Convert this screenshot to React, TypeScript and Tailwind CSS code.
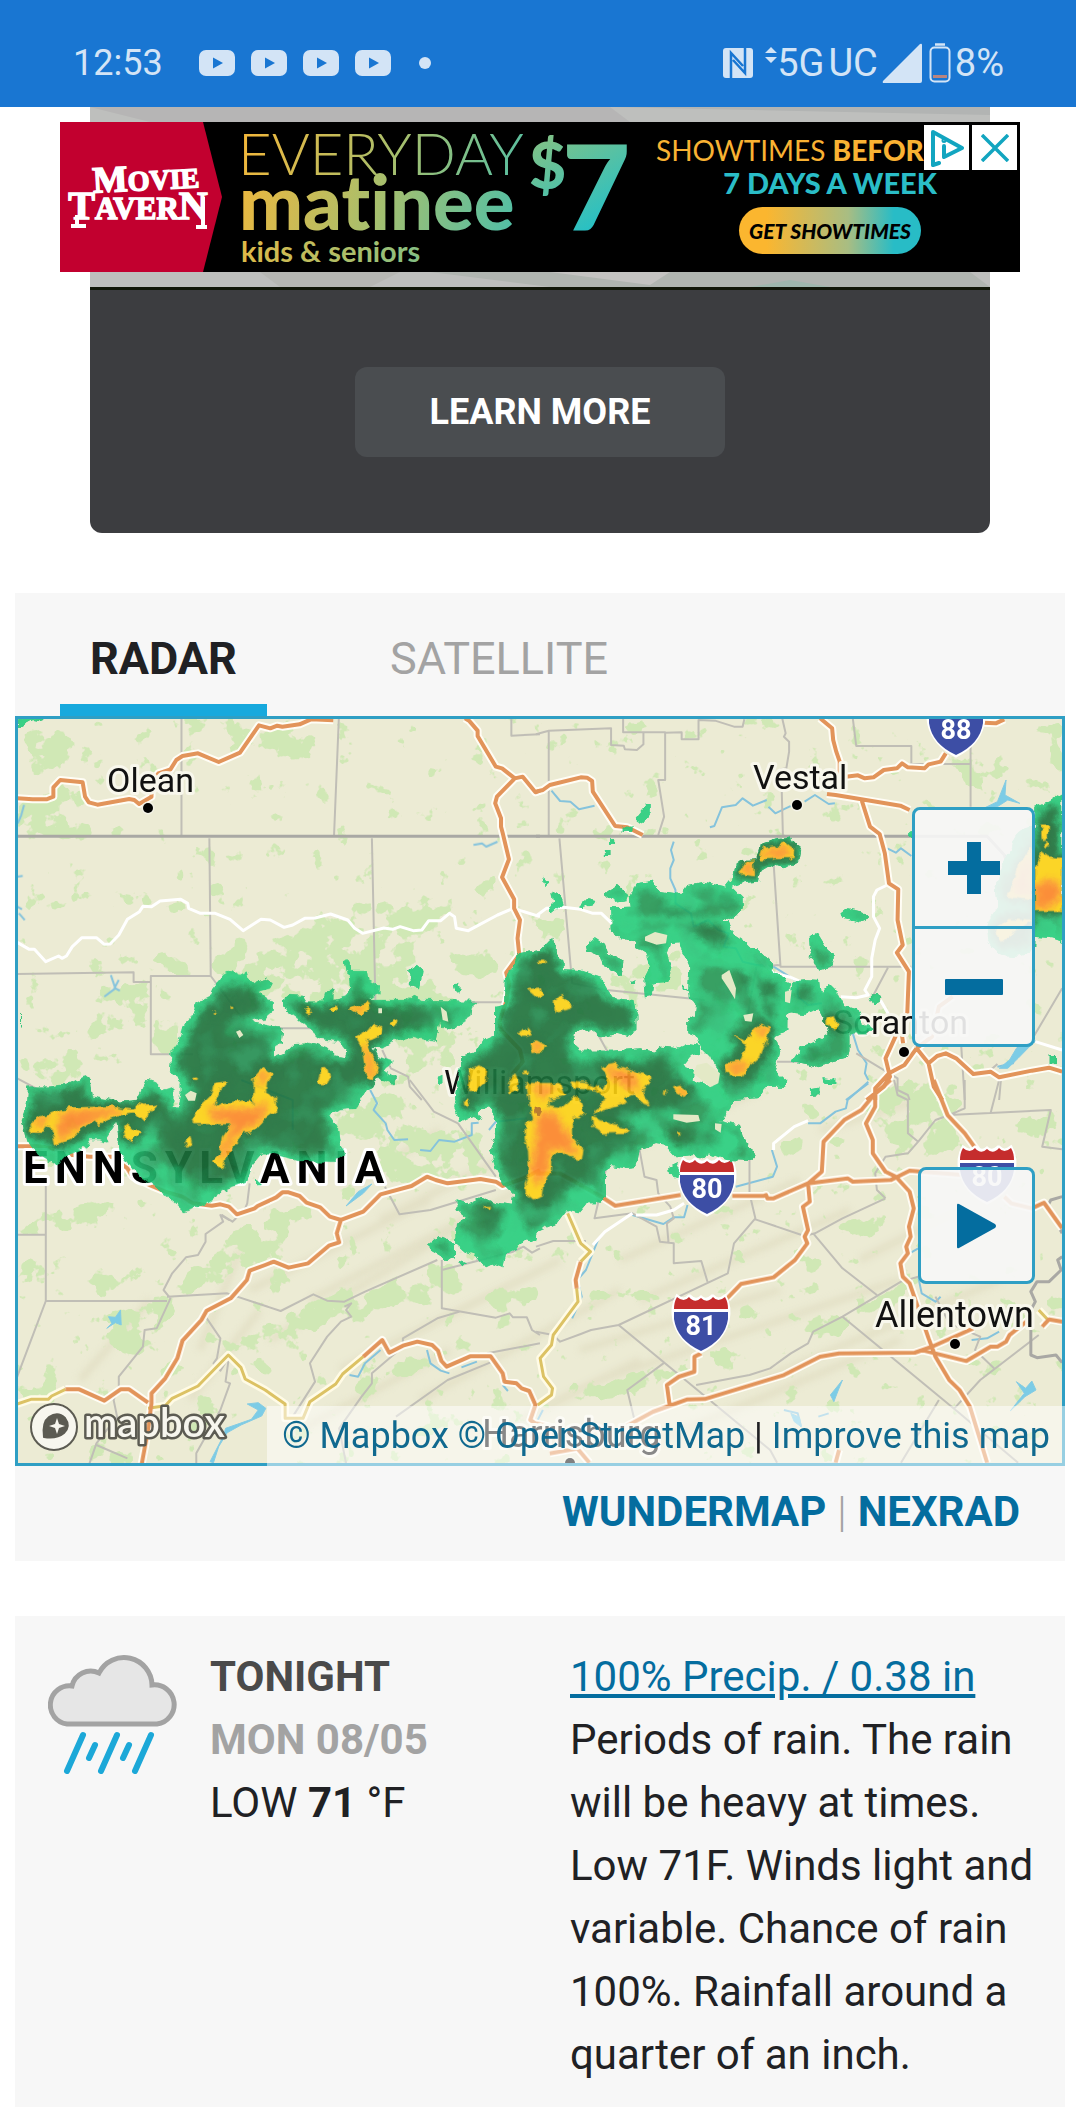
import type { ReactNode } from "react";

/* Survey sheets: each sheet has its own drawing grid, placed on the shared map canvas. */
const SHEET = {
  nw: "translate(0 700) scale(.34435 .33333)",
  ne: "translate(536 700) scale(.34435 .33333)",
  sw: "translate(0 1080) scale(.34435 .33333)",
  se: "translate(536 1080) scale(.34435 .33333)",
  mid: "translate(400 920) scale(.33333)",
  west: "translate(20 940) scale(.33333)",
};
type Sheet = keyof typeof SHEET;
type Layer = Partial<Record<Sheet, string>>;

const counties: Layer = {
  nw: "M527 55V408M984 55L970 408M608 415L612 828M1080 415L1090 900M50 822L388 817V846H438M612 828H438V1063H560M612 828L700 950M1485 55V107L1568 103M760 985H920M1360 907H1460M50 1135L150 1190M1110 1050L1135 1105L1185 1130L1190 1160L1225 1200",
  ne: "M37 92V408M0 103L37 92L218 85V135L255 137L258 148L293 150L312 133V98M253 55V97H375V240H355L372 350L355 405M375 98L423 97V118H472V60L520 62L575 80L600 80L605 58M715 55L725 100L720 110L735 125V155L727 205L712 208L717 405M920 55L930 138H1090V192H1262V320M1262 192V55M690 490L710 800H1090M68 415L105 850L205 870L490 900M160 965L210 1060M1022 803L985 875L970 905M1528 865L1445 1010M1235 1040L1245 1200M930 1060L1050 1135V1170L1080 1185L1085 1200M1345 1200L1350 1140L1320 1110L1340 1092M640 800L610 970M710 795L640 800M700 1085H790",
  sw: "M50 464H133V310M133 464V663H485M133 663L50 890M485 650L660 640L815 693L910 643L950 662L1000 665L1060 635L1270 540M725 310L718 370L710 390L675 425L645 405L665 420L640 405L648 425L597 462V485L575 525L540 532L500 580L475 630L495 655L455 745L420 750L415 800L345 890V920L330 960L340 1010L280 1090L260 1150M280 1095L370 1135M597 710L640 775L630 835L620 850L640 872L665 830L655 905L668 910L640 990L570 1120V1150M1118 320L1160 403L1250 390L1440 330M1190 0L1260 95L1330 130L1440 290M1283 540V685L1440 713L1480 700L1490 712H1530L1545 750L1568 765M1283 570L1490 515L1520 500L1545 518L1568 505M1000 680L1020 670L1005 690L1020 710L990 725L950 770L900 850L915 905L850 1010M1335 695L1270 715L1170 775V800L1080 880V910L1050 950L985 1045L1005 1150M1415 820L1568 790M1415 820L1430 845L1300 900L1150 1010",
  se: "M0 500L50 483H145M205 260L170 415L280 400L350 440L360 485L400 490V550L480 543L498 605M300 205L315 290L350 300L355 340L390 380L400 415L380 430L385 490M620 230V340L637 415L575 490L557 580L240 735L160 750L130 762L70 785L50 765L0 755M637 418L780 468L810 460L890 415L1015 355M805 460L890 565L990 645M1110 590L1060 605L890 710L805 755L790 790L740 820L680 865L620 885L465 915M240 735L680 1110L700 1148M370 850L265 930L300 1080M890 710L1230 1000L1400 1148M1170 960L1060 1148M1215 985L1290 900L1460 765M1040 0L1050 45L1080 60V160L1110 185L1080 220L1015 230L985 280L990 330L1015 355M1110 185L1160 120L1200 105L1495 90L1470 200L1528 208M1245 0V85L1200 105M1345 0L1320 100M1160 650L1200 730L1290 770L1275 810L1330 865",
};

const stateLines: Layer = {
  nw: "M50 409H1568",
  ne: "M0 409H1310L1360 465L1365 480",
  se: "M1528 350L1495 360L1485 380L1528 460M1528 530L1515 540L1525 570L1490 605H1455L1437 635L1450 665L1437 690V825L1455 833L1510 825L1528 848",
};

const rivers: Layer = {
  nw: "M70 315L62 345L52 370M50 530L66 528M50 620L64 628M55 640L72 660M322 825L335 865L303 890M335 865L348 872M345 840L332 865M1375 435L1400 430L1412 440L1445 425",
  ne: "M400 425L392 450L400 480L390 505V535L405 570V610L450 640L458 680L500 660L530 690L560 700L545 740L580 745L600 785L640 795L690 800L760 845V890L790 915L830 910M505 382L518 378L540 322L580 315L600 295L630 317L670 300M675 320L695 340L725 325L740 318M780 305L810 285L850 312L868 310M45 272L70 303L100 305L125 328L170 317M920 1000L935 1050L960 1090L955 1120L965 1140M965 1150L900 1200M1340 1100L1385 1090L1400 1040L1450 1025M1020 445L1045 458L1060 445L1090 468",
  sw: "M1075 30L1095 70L1085 90L1120 130L1125 150L1145 180L1185 178M1220 210L1250 213L1275 180L1320 185L1370 165V130L1390 128M1420 150L1440 125L1530 115M700 0L850 60V150M1015 885L1040 890L1060 850L1105 810M1240 810L1250 850L1280 872L1305 880M1340 862L1385 845M1460 915L1475 933",
  se: "M965 5L905 60L900 85L870 95L825 130H790M685 210L700 260L688 290L580 320M440 375L430 412H400L370 432L280 405M180 480L145 570L120 600L133 650L105 715M1085 520L1110 505M1110 590L1120 640L1160 665L1175 650M1265 780L1310 775L1345 755M720 990L760 1000L770 1040M820 1010L850 1000M20 990L0 1030",
};

const lakes: Layer = {
  ne: "M1300 325L1340 305L1365 240L1362 285L1405 310L1370 300L1340 320ZM1345 1105L1375 1080L1395 1045L1450 1022L1400 1075L1370 1105Z",
  sw: "M1005 378L1040 335L1080 312L1055 340ZM310 745L325 730L315 710L335 712L350 690L352 735L335 728ZM610 1145L650 1065L655 1045L730 1018L750 990L718 972L750 968L772 985L760 1008L700 1035L660 1058L635 1100L620 1148Z",
  se: "M890 900L855 945L865 965L878 930ZM1378 992L1418 940L1395 905L1422 925L1440 903L1452 930L1420 950ZM740 1000L765 1012L770 1040L750 1025Z",
};

const localRoads: Layer = {
  nw: "M50 727L85 748L100 748L133 785L170 768L180 775L193 768L210 740L238 713H280L303 733L320 732L345 705L370 658L405 635L415 619L440 620L465 603L525 598L545 610L548 625L582 640H625L668 658L706 692L758 658L785 660L825 682L850 675L885 655L915 654L960 642L1010 660L1030 685L1053 700L1115 684L1140 688L1162 680L1200 692L1225 690L1245 662H1280L1305 640L1320 650L1325 685L1360 692L1445 645L1490 625L1568 650",
  ne: "M0 648L30 625L80 622L130 628L165 640H190L220 670M640 765L690 820L740 832L780 850M1020 555L990 570L980 590V650L998 685L985 720L975 775V830L955 870L965 885L930 893L885 890M1000 900L1050 990M1450 1025L1528 1050",
  se: "M290 405H350L400 390L430 370M790 122L750 140L690 190V210M280 400L200 455L165 495",
};

const highways: Layer = {
  nw: "M50 295L95 298H135L155 290V262L175 240L240 247L247 290L258 307L283 314L375 297L390 300L404 312L440 290V250L460 220L495 208L512 180L530 168L575 160L635 186L697 158L752 76L785 85L805 77L820 80L870 73L903 58L968 61M1350 55L1362 62L1387 92V108L1440 200L1458 205L1495 235L1443 290L1438 310L1455 355V380L1460 400L1478 478L1458 532L1493 598V625L1510 660L1503 715L1508 765L1470 818L1478 850L1470 905L1450 965L1455 990L1510 1050L1518 1085L1490 1120L1520 1180M1495 235L1518 230L1555 277L1568 272",
  ne: "M0 275L20 270L40 255L130 232L148 233L163 243L165 275L230 378L265 382L310 405M825 55L860 85L863 120L872 155L882 185V250L900 230L935 226L955 235L980 232L1010 210L1048 205L1063 190L1080 202L1128 205L1140 193L1175 185L1190 160M1300 68L1335 70L1360 58M845 282L870 285L945 298L1058 317L1085 330M945 298L970 380L998 402L1013 460L1025 550L1052 568L1050 660L1065 735L1048 758L1083 815L1078 945L1062 1000L1066 1030M1048 1000L1015 1075L1028 1130L1010 1160L960 1200M1105 1045L1070 1095L1025 1120L985 1165V1200M1105 1045L1140 1090L1155 1160L1180 1200M1140 1090L1165 1068L1190 1060L1220 1075L1270 1122L1320 1115L1345 1132L1440 1112L1490 1103L1528 1115M1105 1045L1150 1010L1170 920L1210 890",
  sw: "M50 199H110L150 205L210 225L260 230H325L370 265L385 290L440 318L480 335L530 350L560 370L615 377L640 373L665 380L688 403L740 385L748 378L802 352L820 337H838L870 348L890 368L930 382L958 410L990 420L1055 395L1105 343L1195 318L1240 290L1265 300L1300 310L1395 297L1440 305L1460 318L1520 295L1568 270M990 420L978 460L985 487L955 497L895 550L838 563L795 545L770 555L725 572L717 600L670 655L600 692L585 720L530 782L515 835L480 895L440 940V970L430 1050L412 1150M190 928H230L303 962L350 928H375L430 968M1055 830L1110 780L1130 818L1170 797L1212 785L1255 795L1272 812L1282 843L1297 860L1365 829H1425L1460 880L1465 905L1500 910L1515 925L1537 933L1555 975L1540 1020L1568 1040",
  se: "M0 280H70L190 350L230 377L420 345M570 348H660L668 345L672 355H690L790 310L905 295L920 305L1030 300L1050 290L1085 272L1240 285M790 310L830 275L835 185L895 120L945 90L985 40L1030 0M985 40V80L958 130L978 180V220L1015 275L1045 290L1085 335L1097 385L1083 440L1088 470L1075 500L1080 520L1058 550L1065 590L1085 610L1140 775L1160 830L1200 900L1230 930L1260 980L1310 1148M1155 0L1195 105L1245 160L1280 210M790 310L795 365L775 380L790 450L780 470L788 490L752 540L690 592L595 612L555 655M480 820L460 830V875L415 890L380 915L388 975M260 1040L340 995L440 958L490 957L720 885L825 830L880 820L1100 818L1150 800L1270 745M1120 810L1250 843L1320 800H1340L1365 785L1375 765L1430 720M1470 740L1490 718L1528 725M1360 350L1380 370L1440 385L1475 368L1528 445M880 1110L870 1148M130 545L115 600L118 625M0 1030L40 1040M40 1120L120 1105L155 1148",
};

const tollRoads: Layer = {
  sw: "M50 972L90 958H140L150 948L190 928M430 985L480 977L500 955L575 918L663 825L700 863L712 897L770 930L828 972V1015H880L900 965L975 912L995 882L1055 830",
  se: "M92 400L130 490L158 515L130 545M118 625L122 665L50 765L45 795L12 835L22 890L48 925L45 945L5 975M1460 690L1485 718",
};

const forest: Layer = {
  nw: "M80 90L260 110L270 190L90 230ZM50 320L150 260L240 280L260 405H50ZM560 60H610V100H560ZM680 80L900 70L910 180L800 190L780 130L690 140ZM600 540L660 540V620H610ZM700 510L740 570H695ZM260 640L370 640L320 700ZM480 600H540L550 640L480 650ZM340 760L560 780V830L340 820ZM290 860H430V950L260 1020ZM160 1050L260 1040L240 1090L150 1110ZM440 950H520V1060H440ZM620 760L900 680L1020 620L1330 580L1320 630L1200 740L1180 820L1340 900L1180 960L820 900L700 860L620 800ZM860 700H1080V840H900ZM1380 560L1450 510V610L1400 610ZM1300 770L1500 740L1470 820L1330 830ZM1120 1000L1330 950V1100L1200 1120ZM50 1080L250 1090L240 1150L60 1140ZM1420 200L1460 230L1430 245ZM1220 110L1250 130L1240 180Z",
  ne: "M230 60L350 60L290 110ZM420 60L480 70L460 120L430 110ZM130 170L190 180L180 220ZM1200 180L1380 160V230L1280 270ZM1460 80L1528 70V250ZM150 480L250 490L200 520ZM160 850L420 740L420 860L300 900ZM0 670L80 660V740ZM1030 450L1080 500L1050 500ZM1010 860H1050V905ZM920 150L945 180L925 185ZM470 1080L530 1120L500 1150ZM1000 1120L1120 1150V1200H1000ZM1260 1060L1330 1040L1350 1100L1260 1120Z",
  sw: "M950 100L1190 20L1230 60L1180 160L1000 190ZM90 370H310V460L140 450ZM50 540H130V620L60 620ZM250 720L480 640L500 700L400 840L270 760ZM480 640L700 440L870 380L920 400L740 560L600 620ZM760 590L830 580L800 640ZM670 790L900 670L1100 620L1340 530L1320 590L1100 690L880 760L690 830ZM1130 620L1340 560L1330 650L1180 680ZM1000 480L1060 460L1030 520ZM1090 130L1400 150L1380 300L1100 310ZM280 600L340 570L320 670L270 690ZM190 680H240V710H190ZM60 900L160 880V960L60 960ZM740 840L790 850L760 900ZM1030 910L1400 760L1370 790L1150 900L1080 950ZM1390 650L1568 600V650L1440 690ZM1200 1060L1380 950L1400 1010L1210 1080ZM570 920L620 890V1040L560 1080ZM470 860L560 810L520 900ZM260 1100L380 1120L350 1148H260Z",
  se: "M930 60L1080 20V190L990 180ZM1060 20L1240 10L1230 200L1100 250L1080 190ZM1400 120H1528V230L1410 190ZM700 190L900 160L880 200L720 220ZM760 60L820 80L810 120ZM780 540L860 540L780 590ZM580 690L800 610L780 650L600 710ZM150 630L420 640L380 660L160 650ZM800 760L900 700L1110 590V620L900 750L820 800ZM110 950L380 840L640 790L580 840L330 920L120 980ZM860 430L1030 400L1000 440L900 500ZM1370 680L1440 660V780ZM1370 940L1440 890L1460 930L1390 980ZM450 350L620 390L600 420L480 400ZM260 590L320 570V595Z",
};

const ridges =
  "M250 1290L430 1200M270 1340L480 1215M310 1300L520 1190M340 1370L560 1260M420 1400L620 1290M190 1400L260 1310M560 1180L760 1090M620 1260L800 1180M640 1300L850 1210M580 1350L780 1290M600 1380L900 1280M660 1440L900 1340M760 1380L1000 1280M820 1130L920 1100M360 1180L440 1130M380 1220L520 1150M80 1380L150 1300M300 1430L450 1350M200 1350L240 1250M860 1260L960 1210M520 1420L640 1360";

const radarLight: [Sheet, string][] = [
  ["mid", "M355 100L420 90L450 58L470 75V105L490 125L492 148L540 150L600 170L620 205L640 235L700 240L712 290V330L680 350L650 342L600 352L560 325L525 335L520 370L545 392H640L720 385L760 395L785 380L830 385L865 368L900 375V400L870 410L850 435L860 450L885 450L880 480L930 500L955 480L950 440L930 410L905 385L890 350L862 340V300L885 285L888 260L870 235L865 200L868 140L850 100L835 70L810 72L800 100L815 150L808 185L760 190L755 230L735 235L730 180L750 140L740 100L708 80L710 65L645 50L632 25V0H985L1000 40L1030 60L1060 90L1115 120V150L1155 180L1160 260L1145 280L1165 300V330L1125 350L1140 400L1125 450L1165 485L1155 500L1100 500L1070 535L1000 540L985 580L960 600L1020 615L1030 655L1062 700L1055 722L980 720L930 700L905 718L880 705L830 712L800 678L765 672L718 690L710 740L670 745L638 738L618 750V830L590 850L560 850L535 880L500 870L470 910L410 935L405 965L370 960L350 990L318 1005L310 1042L280 1030L255 1042L230 1010L200 1000L165 970L168 910L200 895L170 870V838L205 850L245 830L280 845L335 855L340 820L310 790L285 740L270 690L285 640V600L270 560L235 575L245 600L220 590L180 603L160 560L185 410L225 400L250 360L285 345V260L315 255L318 170Z"],
  ["ne", "M218 622L278 620L275 590L290 550L340 542L360 575L420 585L440 555L490 545L550 560L570 535L575 500L600 480L640 478L650 435L700 415L735 410L745 430L770 450L765 480L720 508L690 495L650 520L645 545L600 550L570 560L603 595V625L570 662L545 650L550 680L570 710L600 740L640 745L685 790L680 810L700 830L740 850L730 870L735 910L740 860L760 840L790 838L825 840L830 880L850 855L880 885L895 915L930 925L950 970L978 990L960 1000L910 1000V1050L905 1075L810 1100L740 1085L770 1040L820 1020L850 1000L830 950L820 930L780 945L740 940L710 960L680 980L650 930L620 800L440 780L425 740L380 695L300 700L240 715L220 690Z"],
  ["ne", "M290 350L320 312L333 312V340L312 372L290 362ZM885 640L905 625L950 635L968 655L940 668L890 655ZM795 705L815 700L845 750L865 770L860 800L820 812L805 780L790 770L798 745ZM970 890L990 880L1000 895L980 910ZM45 575L75 590L80 610L45 640L38 620L50 610ZM125 622L150 595L172 600L165 615L135 625ZM200 580L235 555L255 572L270 585L265 600L230 605ZM252 380H280V396H252ZM212 418H224V434H212ZM203 450H216V465H203ZM18 530L38 545L25 556ZM832 1135L872 1140V1152H835ZM795 1165L820 1160V1185L800 1188ZM1492 1068H1510V1090H1492ZM1084 400H1100V414H1084ZM1450 320L1490 305L1528 280V725L1500 715L1450 710ZM1450 380Q1390 380 1380 440Q1350 500 1335 560L1340 620L1320 650Q1290 720 1340 760Q1400 790 1450 740Z"],
  ["mid", "M560 75L585 55L615 75L620 95L670 120L665 165L640 155L610 140L600 110L565 95ZM28 150L50 135L68 150L60 205L30 195ZM165 195L175 188L182 205L170 215ZM88 970L115 950L165 970V1015L140 1020L90 990ZM178 1022L200 1030L190 1042ZM808 740L830 730L840 750L835 775L810 765ZM110 470L130 465V490L115 492ZM690 182H708V194H690ZM845 190L870 215L845 205Z"],
  ["west", "M580 140L610 105L640 88L660 105L680 95L685 115L700 130L730 115L758 130L750 145L715 155L730 170L758 180V215L735 235L690 240L710 250L790 265L785 310L765 325V350L790 340L820 310L860 308L920 325L945 350L975 355L980 330L960 305L900 295L850 250L800 210L785 185L810 165L850 168L860 185L910 185L915 155L940 150V180L980 170L990 140L985 90H1040L1045 120L1080 140L1078 160L1050 180H1160L1180 165L1210 180L1375 183L1355 200L1350 230L1320 250L1300 270L1265 262L1260 245L1250 305L1220 300L1180 290L1120 300L1085 325L1060 320L1075 350L1118 365L1110 380L1095 390L1128 415L1120 432L1080 415L1040 450L1010 505L960 510L930 530L955 570L960 620L975 640L940 665L830 662L760 640H725L700 670L680 725L620 745L560 790L490 813L460 785L420 750L340 690L300 640L290 545L260 590L265 610L240 600L210 600L200 620L130 650L110 675L70 650L20 610L5 540L20 500L25 440L90 440L150 430L190 410L210 425L215 470L300 485L350 480L380 420L410 430L430 450L460 440V500L475 500L485 460V430L450 390L455 335L480 300L490 260L510 240L530 190L570 170ZM975 65L985 58L992 70V90H980ZM1170 90L1190 75L1205 90L1200 140L1175 140ZM1305 140L1318 130L1320 150L1310 158ZM708 724H718V735H708ZM0 220H3V265H0Z"],
  ["nw", "M50 55H145L120 64L95 60L60 80H50Z"],
];

const radarDark: [Sheet, string][] = [
  ["mid", "M350 150L370 110L460 80L480 150L560 165L610 230L690 250L710 320L620 340L540 310L500 370L520 430L700 440L790 400L830 470L900 530L860 560L700 580L650 620L720 680L640 700L600 740L560 790L500 800L440 880L390 870L350 820L340 780L290 700L310 600L260 560L190 560L200 450L300 360L310 270L340 240ZM200 850L320 860L300 900L260 890ZM1020 160L1070 160L1070 200L1020 195ZM1070 180L1135 185V230H1075ZM1060 250L1125 255L1120 295H1070ZM970 450L1040 340L1110 300L1130 350L1070 470L980 490ZM800 620L880 630L880 670L810 670ZM890 630L950 640L935 685ZM220 880L300 900L270 950ZM380 900L450 890L400 930ZM650 180L665 130L620 120ZM100 965H145V990H110Z"],
  ["ne", "M525 590L560 580L570 600L550 610ZM590 500L645 460L660 430L745 435L755 475L640 530ZM350 620L480 640L560 720L500 720L380 650ZM600 810L640 820L630 840ZM660 850L700 850V890L660 880ZM835 940L890 940L890 990L835 990ZM780 1035L815 1030V1070L775 1065ZM1460 320L1528 310V640H1440ZM760 860H800V900L760 890ZM1350 640H1440V740H1340Z"],
  ["west", "M590 150L640 130L700 150L740 190L700 220L640 230L620 280L740 280L760 350L800 360L850 330L900 360L960 350L990 330L960 290L860 250L800 190L850 185L920 200L1000 190L1010 110L1030 180L1150 200L1210 200L1240 230L1200 270L1080 290L1060 420L980 450L900 530L930 630L800 640L700 620L660 700L560 740L480 700L420 600L380 540L310 600L310 520L260 560L130 620L60 600L25 540L40 460L180 440L220 480L370 480L400 450L430 500L480 540L530 440L460 380L500 300L530 220ZM1290 200L1330 200L1300 230Z"],
];

const radarGold: [Sheet, string][] = [
  ["mid", "M378 490H480L495 530L445 540V560L480 565L520 530L535 535L552 580L540 592L515 590V650L550 690L545 718L520 712L490 700L457 705L455 750L430 790L425 825L400 838L378 820L375 790L388 760L385 690L375 660V615L400 600L390 550ZM605 440L640 432L750 470V490L725 510L748 555L730 550L700 520L670 530L680 550L610 570L585 585L600 560L615 535L590 510L520 505L508 485L560 490L610 510L625 480ZM575 590L620 605L692 628L680 638L610 640L580 620ZM325 490L345 460L355 490L350 510L330 520ZM208 450L235 436L262 450L255 490L225 515L205 515L210 480ZM195 545L205 535L213 550L205 562ZM382 208L420 203L430 225L410 233ZM462 245L485 225L518 262L470 278ZM413 120h20v10h-20ZM355 340L380 322L395 345L370 350ZM390 370L410 365L437 380L430 392L395 395ZM250 862L272 862L268 872ZM820 500L840 495L865 515L850 530L830 520ZM830 635L842 640L835 648ZM372 452H382V462H372ZM790 513H798V521H790ZM1000 350L1040 360L1060 330L1085 312L1107 325L1100 360L1080 410L1045 440L1025 470H985L975 430L1020 425L1035 390L1040 370Z"],
  ["west", "M30 550L60 530L110 515L150 503L270 500L345 510L350 490L370 495L410 492L385 520L370 545L345 520L300 525L250 545L235 555L225 540L180 570L150 600L105 613L95 560L78 555L70 578H32ZM310 560L325 552L340 568L365 575L335 605L315 590ZM517 540L550 490L570 470L580 430L622 425L600 450L580 500L610 490L690 480L700 498L705 440L700 415L730 382L758 400L740 430L738 455L765 475L770 510L735 535L700 575L670 580L640 620L620 650L608 690L580 660L600 640L610 590L635 552H520ZM497 600L510 588L515 610L503 620ZM905 382L918 382L930 415L920 432H895L900 410ZM1008 290L1045 270L1060 252L1085 262L1082 285L1050 300L1040 300L1055 345L1073 385L1060 420L1045 415L1035 380L1025 320ZM988 205L1020 195L1040 185L1048 205L1020 225L1000 215ZM930 208L950 197L957 210L940 222ZM855 208L868 202L875 222L862 225ZM1108 250L1120 237L1133 245L1120 260ZM580 216H585V221H580ZM633 201H638V206H633ZM522 414H532V422H522Z"],
  ["ne", "M652 470L660 445L710 438L718 425L752 452L750 474L700 473L655 478ZM592 515L610 485L632 482L635 528L595 522ZM845 955L865 950L878 975L865 990L845 975ZM1466 375H1486V410L1470 420ZM1475 420L1490 440L1482 445ZM1450 500L1470 455L1490 470L1528 475V632H1450ZM1370 590L1400 500L1440 440V600ZM1330 690L1370 655L1440 660L1350 725Z"],
];

const radarOrange: [Sheet, string][] = [
  ["mid", "M415 590L460 580L500 640L530 700L450 680L440 750L410 790L395 740L410 660ZM400 500L460 505L430 530ZM620 445L700 460L710 510L650 480ZM1070 325L1100 325L1085 345ZM985 435L1040 430L1010 462ZM835 505L858 518L845 525ZM400 370L425 380L405 390Z"],
  ["west", "M130 520L270 508L300 515L230 535L160 570L120 600L115 550ZM45 545L80 530L60 560ZM715 410L740 395L725 430ZM570 510L700 510L740 490L720 540L640 590L620 640L600 650L640 550L580 535ZM1035 320L1055 370L1060 410L1045 400ZM1000 205L1030 200L1015 215Z"],
  ["ne", "M655 462L715 443L740 457L700 470ZM598 505L625 485L628 525ZM1450 560L1500 540L1528 580L1490 620H1450ZM1380 570L1430 480V580Z"],
];

const gaps: [Sheet, string][] = [
  ["mid", "M735 50L765 36L802 45L798 70L770 74L735 62ZM965 165L988 150L1008 205L1005 238L985 205L965 175ZM1030 285L1060 280L1055 305L1035 303ZM1155 215L1175 210L1170 250L1155 245ZM820 583L895 585L900 603L860 608L820 598ZM945 610L965 612L962 638L945 628ZM890 435L920 428L960 460L955 490L930 502L905 480L880 460ZM925 410H932V416H925Z"],
  ["west", "M648 275L660 270L670 285L658 294ZM495 465L512 452L530 460L525 482H505ZM1075 205H1086V220H1075ZM1262 200L1280 215L1285 245L1268 240Z"],
];

function Lines({ layer, color, width, fill }: { layer: Layer; color: string; width: number; fill?: string }) {
  return (
    <g fill={fill ?? "none"} stroke={color} strokeWidth={width} strokeLinejoin="round">
      {(Object.keys(layer) as Sheet[]).map((k) => (
        <path key={k} d={layer[k]} transform={SHEET[k]} vectorEffect="non-scaling-stroke" />
      ))}
    </g>
  );
}

function Cells({ cells, ...rest }: { cells: [Sheet, string][]; fill: string; filter?: string; stroke?: string; strokeWidth?: number; opacity?: number }) {
  return (
    <g {...rest} strokeLinejoin="round">
      {cells.map(([k, d], i) => (
        <path key={i} d={d} transform={SHEET[k]} vectorEffect="non-scaling-stroke" />
      ))}
    </g>
  );
}

function Shield({ x, y, label }: { x: number; y: number; label: string }) {
  return (
    <g transform={`translate(${x} ${y})`}>
      <path d="M-24-1Q-17 5-12-1L-11-1Q-5 5 0 0Q5 5 11-1L12-1Q17 5 24-1Q30 10 27 24Q22 44 0 55Q-22 44-27 24Q-30 10-24-1Z" fill="#fff" stroke="#fff" strokeWidth="3" />
      <path d="M-24 0Q-17 6-12 0Q-6 7 0 1Q6 7 12 0Q17 6 24 0Q27 5 27 12H-27Q-27 5-24 0Z" fill="#c52d2d" />
      <path d="M-27 15H27V22Q24 43 0 54Q-24 43-27 22Z" fill="#3d4ea5" />
      <text y="38" textAnchor="middle" fontSize="27" fontWeight="700" fill="#fff">{label}</text>
    </g>
  );
}

function Town({ x, y, size = 34, dot, children }: { x: number; y: number; size?: number; dot?: [number, number]; children: ReactNode }) {
  return (
    <g>
      <text x={x} y={y} fontSize={size} fill="#111" stroke="#f8f7ec" strokeWidth="6" strokeLinejoin="round" paintOrder="stroke">{children}</text>
      {dot && <circle cx={dot[0]} cy={dot[1]} r="5" fill="#000" stroke="#f3f2e6" strokeWidth="3" paintOrder="stroke" />}
    </g>
  );
}

function RadarMap() {
  return (
    <svg viewBox="18 719 1044 744" className="block h-auto w-full font-[Roboto,sans-serif]" role="img" aria-label="Radar map of Pennsylvania">
      <defs>
        <filter id="veg" filterUnits="userSpaceOnUse" x="15" y="716" width="1050" height="749" colorInterpolationFilters="sRGB">
          <feTurbulence type="fractalNoise" baseFrequency="0.045" numOctaves="4" seed="8" />
          <feColorMatrix values="0 0 0 0 0  0 0 0 0 0  0 0 0 0 0  1 0 0 0 0" result="n" />
          <feGaussianBlur in="SourceAlpha" stdDeviation="3" result="s" />
          <feComposite in="n" in2="s" operator="arithmetic" k2="1" k3="0.29" />
          <feComponentTransfer result="x"><feFuncA type="linear" slope="22" intercept="-15.4" /></feComponentTransfer>
          <feFlood floodColor="#d0e8b5" />
          <feComposite in2="x" operator="in" />
        </filter>
        <filter id="edge" filterUnits="userSpaceOnUse" x="15" y="716" width="1050" height="749" colorInterpolationFilters="sRGB">
          <feTurbulence type="fractalNoise" baseFrequency="0.12" numOctaves="2" seed="4" />
          <feDisplacementMap in="SourceGraphic" scale="7" xChannelSelector="R" yChannelSelector="G" />
        </filter>
        <filter id="soft" filterUnits="userSpaceOnUse" x="15" y="716" width="1050" height="749" colorInterpolationFilters="sRGB"><feGaussianBlur stdDeviation="5" /></filter>
        <filter id="softer" filterUnits="userSpaceOnUse" x="15" y="716" width="1050" height="749" colorInterpolationFilters="sRGB"><feGaussianBlur stdDeviation="3" /></filter>
        <filter id="mottle" filterUnits="userSpaceOnUse" x="15" y="716" width="1050" height="749" colorInterpolationFilters="sRGB">
          <feTurbulence type="fractalNoise" baseFrequency="0.03" numOctaves="2" seed="12" />
          <feColorMatrix values="0 0 0 0 .14  0 0 0 0 .5  0 0 0 0 .28  4 0 0 0 -1.6" />
        </filter>
        <filter id="bright" filterUnits="userSpaceOnUse" x="15" y="716" width="1050" height="749" colorInterpolationFilters="sRGB">
          <feTurbulence type="fractalNoise" baseFrequency="0.03" numOctaves="2" seed="30" />
          <feColorMatrix values="0 0 0 0 .18  0 0 0 0 .72  0 0 0 0 .46  4 0 0 0 -2" />
        </filter>
        <clipPath id="rain">
          {radarLight.map(([k, d], i) => <path key={i} d={d} transform={SHEET[k]} />)}
        </clipPath>
        <clipPath id="heavy">
          {radarGold.map(([k, d], i) => <path key={i} d={d} transform={SHEET[k]} />)}
        </clipPath>
      </defs>

      <rect x="15" y="716" width="1050" height="749" fill="#ecebd4" />
      <path d={ridges} stroke="#e3e0c6" strokeWidth="7" fill="none" filter="url(#softer)" />
      <g filter="url(#veg)"><Lines layer={forest} color="none" width={0} fill="#000" /></g>
      <Lines layer={rivers} color="#85c3dc" width={2} />
      <Lines layer={lakes} color="#85cbe2" width={1} fill="#7ccce6" />
      <Lines layer={counties} color="#c0beb6" width={2} />
      <Lines layer={stateLines} color="#a9a8a4" width={3} />
      <Lines layer={localRoads} color="#fff" width={3} />
      <Lines layer={tollRoads} color="#fffbe6" width={8} />
      <Lines layer={highways} color="#fffdf5" width={8} />
      <Lines layer={tollRoads} color="#dcc264" width={3} />
      <Lines layer={highways} color="#e2945a" width={4} />

      <text x="23" y="1183" fontSize="44" fontWeight="700" fill="#000" stroke="#fff" strokeWidth="6" strokeLinejoin="round" paintOrder="stroke" className="tracking-[7px]">ENNSYLVANIA</text>
      <Town x={444} y={1094}>Williamsport</Town>
      <Town x={833} y={1034} dot={[904, 1052]}>Scranton</Town>
      <Shield x={707} y={1160} label="80" />

      <g opacity="0.9" filter="url(#edge)">
        <Cells cells={radarLight} fill="#26cf7e" />
        <g clipPath="url(#rain)">
          <rect x="15" y="716" width="1050" height="749" filter="url(#mottle)" opacity=".7" />
          <Cells cells={radarDark} fill="#1d6e3a" filter="url(#soft)" opacity={0.95} />
          <rect x="15" y="716" width="1050" height="749" filter="url(#bright)" opacity=".4" />
          <Cells cells={radarLight} fill="none" stroke="#26cf7e" strokeWidth={7} filter="url(#softer)" />
          <Cells cells={radarGold} fill="#1d6e3a" stroke="#1d6e3a" strokeWidth={9} filter="url(#softer)" />
        </g>
        <Cells cells={radarGold} fill="#fdd313" stroke="#c4ad25" strokeWidth={1} />
        <g clipPath="url(#heavy)">
          <Cells cells={radarOrange} fill="#fd8428" stroke="#fd9a2b" strokeWidth={5} filter="url(#softer)" />
        </g>
        <circle cx="538" cy="1111" r="4" fill="#b5701f" />
      </g>
      <Cells cells={gaps} fill="#e3e9c6" />

      <Town x={107} y={792} dot={[148, 808]}>Olean</Town>
      <Town x={753} y={789} dot={[797, 805]}>Vestal</Town>
      <Town x={875} y={1327} size={36} dot={[955, 1344]}>Allentown</Town>
      <Town x={482} y={1447} size={38} dot={[570, 1463]}>Harrisburg</Town>
      <Shield x={701} y={1297} label="81" />
      <Shield x={956} y={701} label="88" />
      <Shield x={987} y={1148} label="80" />

      <g fill="#f7f6ee" stroke="#5c5b52" strokeWidth="2">
        <circle cx="54" cy="1427" r="23" />
        <path d="M44 1437Q42 1422 49 1417Q58 1411 65 1418Q71 1426 64 1433Q57 1439 44 1437Z" fill="#5c5b52" />
        <path d="M57 1418L59 1424L65 1426L59 1428L57 1434L55 1428L49 1426L55 1424Z" stroke="none" />
        <text x="84" y="1437" fontSize="40" fontWeight="600" strokeWidth="5" strokeLinejoin="round" paintOrder="stroke" fontFamily="Lato, sans-serif">mapbox</text>
      </g>
    </svg>
  );
}

function Banner() {
  return (
    <svg viewBox="60 122 960 150" className="block h-auto w-full" role="img" aria-label="Movie Tavern advertisement">
      <defs>
        <linearGradient id="gold" gradientUnits="userSpaceOnUse" x1="240" y1="140" x2="530" y2="240">
          <stop offset="0" stopColor="#f3b73a" /><stop offset=".5" stopColor="#a6bf6e" /><stop offset="1" stopColor="#45bfae" />
        </linearGradient>
        <linearGradient id="teal" gradientUnits="userSpaceOnUse" x1="540" y1="130" x2="600" y2="232">
          <stop offset="0" stopColor="#86c283" /><stop offset="1" stopColor="#22c0c8" />
        </linearGradient>
        <linearGradient id="pill"><stop offset=".15" stopColor="#fbb62f" /><stop offset=".6" stopColor="#a8bd83" /><stop offset=".85" stopColor="#28bcc6" /></linearGradient>
      </defs>
      <rect x="60" y="122" width="960" height="150" fill="#000" />
      <path d="M60 122H203L222 197L203 272H60Z" fill="#c2002f" />
      <g fill="#fff" fontFamily="Liberation Serif, serif" fontWeight="700" stroke="#fff" strokeWidth="1.5" textAnchor="middle">
        <text x="146" y="190" fontSize="37" transform="rotate(-3 146 180)">M<tspan fontSize="28">OVIE</tspan></text>
        <text x="138" y="219" fontSize="40">T<tspan fontSize="31">AVER</tspan>N</text>
        <path d="M77 215V226M71 226H86M203 197V227M196 227H207" strokeWidth="4" />
      </g>
      <g fill="url(#gold)" fontFamily="Lato, sans-serif">
        <text x="238" y="175" fontSize="58" fontWeight="300">EVERYDAY</text>
        <text x="239" y="230" fontSize="76" fontWeight="900" className="[font-variant-ligatures:none]">matinee</text>
        <text x="241" y="262" fontSize="29" fontWeight="700">kids &amp; seniors</text>
      </g>
      <g fill="url(#teal)" fontFamily="Lato, sans-serif" fontWeight="900">
        <text x="529" y="189" fontSize="64">$</text>
        <text x="562" y="230" fontSize="118">7</text>
      </g>
      <text x="656" y="161" fontSize="28" fill="#f9b233" fontFamily="Lato, sans-serif">SHOWTIMES <tspan fontWeight="900">BEFORE 6</tspan></text>
      <text x="830" y="194" fontSize="29" fill="#2abdc7" fontFamily="Lato, sans-serif" fontWeight="900" textAnchor="middle">7 DAYS A WEEK</text>
      <rect x="739" y="207" width="182" height="47" rx="23.5" fill="url(#pill)" />
      <text x="830" y="239" fontSize="21" fontStyle="italic" fontWeight="900" textAnchor="middle" fontFamily="Lato, sans-serif">GET SHOWTIMES</text>
    </svg>
  );
}

function VideoIcon() {
  return (
    <svg viewBox="0 0 36 26" className="h-[26px] w-9">
      <rect width="36" height="26" rx="7" fill="#d3e4f6" /><path d="M14 7.500L24 13L14 18.500Z" fill="#1976d2" />
    </svg>
  );
}

function StatusBar() {
  return (
    <header className="flex h-[107px] items-center justify-between bg-[#1976d2] pt-[18px] pr-[72px] pl-[73px] text-4xl leading-none text-[#d3e4f6]">
      <div className="flex items-center">
        <time className="mr-9">12:53</time>
        <div className="flex items-center gap-4">
          <VideoIcon /><VideoIcon /><VideoIcon /><VideoIcon />
          <span className="ml-3 size-3 rounded-full bg-[#d3e4f6]" />
        </div>
      </div>
      <div className="flex items-center text-[38px]">
        <svg viewBox="0 0 30 30" className="mr-3 size-[30px]">
          <rect width="30" height="30" rx="3" fill="#d3e4f6" />
          <path d="M8 30V5L20 18M22 0V25L10 12" fill="none" stroke="#1976d2" strokeWidth="2.500" />
        </svg>
        <svg viewBox="0 0 12 16" className="mb-4 h-4 w-3" fill="#d3e4f6"><path d="M6 0L12 6H0ZM6 16L12 10H0Z" /></svg>
        <span className="mr-1 flex gap-1 leading-none"><span>5G</span><span>UC</span></span>
        <svg viewBox="0 0 40 40" className="mr-[7px] size-10"><path d="M38 1Q40 0 40 2V38Q40 40 38 40H2Q0 40 1 38Z" fill="#d3e4f6" /></svg>
        <svg viewBox="0 0 22 40" className="mr-1 h-10 w-[22px]">
          <path d="M6 1.500H16" stroke="#d3e4f6" strokeWidth="2.500" /><rect x="1.500" y="4.500" width="19" height="34" rx="4" fill="none" stroke="#d3e4f6" strokeWidth="2" /><path d="M4 33.500H18" stroke="#b9847f" strokeWidth="3" />
        </svg>
        <span className="leading-none">8%</span>
      </div>
    </header>
  );
}

function WeatherIcon() {
  return (
    <svg viewBox="47 1653 130 120" className="h-[120px] w-[130px]" role="img" aria-label="Heavy rain">
      <path d="M66 1722A18 18 0 0 1 71 1684A19 19 0 0 1 98 1671A28 28 0 0 1 151 1683A19.500 19.500 0 1 1 156 1722Z" fill="#e6e6e6" stroke="#a3a3a3" strokeWidth="5" />
      <path d="M82 1733L66 1769M116 1733L100 1769M150 1733L134 1769M94 1743L88 1756M128 1743L122 1756" stroke="#1ca8d8" strokeWidth="6" strokeLinecap="round" fill="none" />
    </svg>
  );
}

export default function App() {
  return (
    <div className="flex min-h-screen flex-col bg-white font-[Roboto,sans-serif] text-[#202124]">
      <StatusBar />

      <section className="relative mr-[86px] ml-[90px] h-[426px] rounded-b-xl bg-[#3c3d40]">
        <svg viewBox="0 0 900 183" preserveAspectRatio="none" className="block h-[183px] w-full" aria-hidden="true">
          <rect width="900" height="183" fill="#bebfbd" />
          <path d="M0 0H520L540 15H60Z" fill="#b6b5b5" /><path d="M520 0H900V8Z" fill="#b2b4b3" />
          <path d="M170 165L320 160L280 180H190Z" fill="#b6b7b3" /><path d="M340 165L460 180H600L620 165ZM620 165H880L900 180H600Z" fill="#b0b5b0" /><path d="M460 165H580L560 178Z" fill="#c4c3c1" />
          <path d="M660 180L700 173L740 180Z" fill="#9fb8ad" />
          <rect y="180" width="900" height="3" fill="#111708" />
        </svg>
        <div className="flex justify-center pt-[77px]">
          <button className="h-[90px] w-[370px] rounded-xl bg-[#4a4d50] text-4xl font-bold text-white">LEARN MORE</button>
        </div>
        <aside className="absolute top-[15px] -right-[30px] -left-[30px]">
          <Banner />
          <div className="absolute top-[3px] right-[3px] flex gap-[3px]">
            <button aria-label="About this ad" className="flex size-[45px] items-center justify-center bg-white">
              <svg viewBox="0 0 36 38" className="h-[38px] w-9" fill="none" stroke="#12a5c0" strokeWidth="4" strokeLinejoin="round" strokeLinecap="round"><path d="M10 34L4 36V3L33 19L15 28V17" /><circle cx="15" cy="11.500" r="1" strokeWidth="3" /></svg>
            </button>
            <button aria-label="Close ad" className="flex size-[45px] items-center justify-center bg-white">
              <svg viewBox="0 0 28 28" className="size-7" stroke="#12a5c0" strokeWidth="3.500"><path d="M1 1L27 27M27 1L1 27" /></svg>
            </button>
          </div>
        </aside>
      </section>

      <section className="mt-[60px] mr-[11px] ml-[15px] bg-[#f7f7f7]">
        <div role="tablist" className="flex h-[123px] gap-[93px] pl-[45px] text-[45px]">
          <button role="tab" aria-selected="true" className="border-b-12 border-[#17a9dd] px-[30px] pt-5 font-bold">RADAR</button>
          <button role="tab" aria-selected="false" className="border-b-12 border-transparent px-[30px] pt-5 text-[#a3a3a3]">SATELLITE</button>
        </div>
        <div className="relative border-3 border-[#2f9fc4]">
          <RadarMap />
          <div className="absolute top-[88px] right-[27px] flex w-[123px] flex-col overflow-hidden rounded-lg border-3 border-[#2f9fc4] bg-[#f7f7f7]/90">
            <button aria-label="Zoom in" className="flex h-[119px] items-center justify-center border-b-3 border-[#2f9fc4]">
              <svg viewBox="0 0 52 52" className="size-[52px]" fill="#046d9f"><path d="M19 0H33V19H52V33H33V52H19V33H0V19H19Z" /></svg>
            </button>
            <button aria-label="Zoom out" className="flex h-[115px] items-center justify-center">
              <svg viewBox="0 0 58 16" className="h-4 w-[58px]" fill="#046d9f"><rect width="58" height="16" rx="1" /></svg>
            </button>
          </div>
          <button aria-label="Play radar loop" className="absolute top-[448px] right-[27px] flex h-[117px] w-[117px] items-center justify-center rounded-lg border-3 border-[#2f9fc4] bg-[#f7f7f7]/90">
            <svg viewBox="0 0 40 46" className="h-[46px] w-10" fill="#046d9f"><path d="M0 2Q0 0 2 1L38 21Q40 23 38 25L2 45Q0 46 0 44Z" /></svg>
          </button>
          <p className="absolute -right-[3px] -bottom-[3px] bg-white/50 px-[15px] text-4xl leading-[60px] whitespace-nowrap">
            <a href="#mapbox" className="text-[#10698f]">© Mapbox</a> <a href="#osm" className="text-[#10698f]">© OpenStreetMap</a> | <a href="#improve" className="text-[#10698f]">Improve this map</a>
          </p>
        </div>
        <nav className="flex h-[95px] items-center justify-end gap-[11px] pr-[45px] pb-1 text-[42px] font-bold text-[#046d9f]">
          <a href="#wundermap">WUNDERMAP</a>
          <span className="font-light text-[#a3a3a3]">|</span>
          <a href="#nexrad">NEXRAD</a>
        </nav>
      </section>

      <section className="mt-[55px] mr-[11px] ml-[15px] flex grow bg-[#f7f7f7] pt-[29px] text-[42px] leading-[63px]">
        <div className="w-[195px] shrink-0 pt-2.5 pl-[33px]"><WeatherIcon /></div>
        <div className="w-[360px] shrink-0">
          <h2 className="font-bold text-[#4a4a4a]">TONIGHT</h2>
          <p className="font-bold text-[#a3a3a3]">MON 08/05</p>
          <p>LOW <b>71</b> °F</p>
        </div>
        <div className="grow pr-6">
          <a href="#precip" className="text-[#046d9f] underline">100% Precip. / 0.38 in</a>
          <p>Periods of rain. The rain will be heavy at times. Low 71F. Winds light and variable. Chance of rain 100%. Rainfall around a quarter of an inch.</p>
        </div>
      </section>
    </div>
  );
}
